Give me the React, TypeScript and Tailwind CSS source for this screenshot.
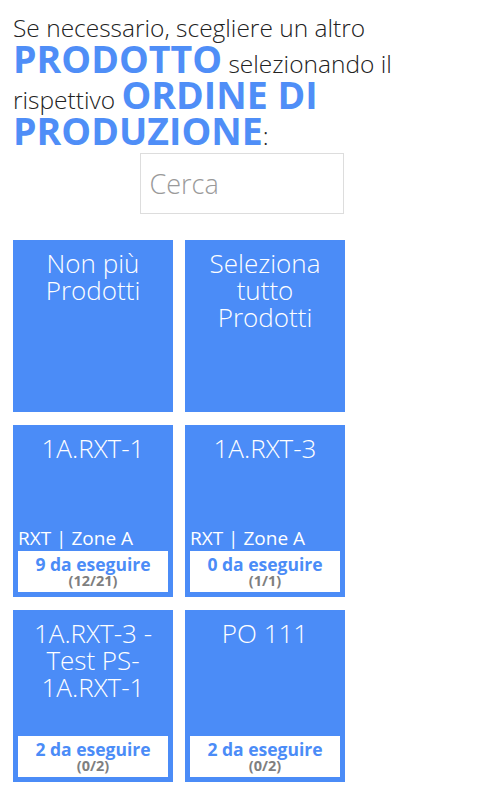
import React from "react";

type Order = {
  title: string;
  zone?: string;
  todo?: number;
  done?: string;
};

const orders: Order[] = [
  { title: "Non più Prodotti" },
  { title: "Seleziona tutto Prodotti" },
  { title: "1A.RXT-1", zone: "RXT | Zone A", todo: 9, done: "(12/21)" },
  { title: "1A.RXT-3", zone: "RXT | Zone A", todo: 0, done: "(1/1)" },
  { title: "1A.RXT-3 - Test PS-1A.RXT-1", todo: 2, done: "(0/2)" },
  { title: "PO 111", todo: 2, done: "(0/2)" },
];

function OrderCard({ order }: { order: Order }) {
  return (
    <div className="flex h-[172px] w-[160px] flex-col bg-[#4b8cf7] p-[5px] text-white">
      <div className="pt-[5px] text-center text-[26px] font-light leading-[27px]">
        {order.title}
      </div>
      <div className="mt-auto">
        {order.zone && (
          <div className="mb-[2px] text-[19px] leading-[22px]">{order.zone}</div>
        )}
        {order.todo !== undefined && (
          <div className="flex h-[41px] flex-col items-center justify-center bg-white">
            <div className="text-[17.5px] font-bold leading-[18px] text-[#4b8cf7]">
              {order.todo} da eseguire
            </div>
            <div className="text-[14.5px] font-bold leading-[15px] text-[#7f7f7f]">
              {order.done}
            </div>
          </div>
        )}
      </div>
    </div>
  );
}

export default function App() {
  return (
    <div
      className="min-h-screen bg-white px-[13px] pt-[10px]"
      style={{ fontFamily: '"Open Sans", sans-serif' }}
    >
      <p className="text-[24.5px] font-light leading-[36px] text-[#222]">
        Se necessario, scegliere un altro{" "}
        <span className="text-[37.5px] font-bold leading-[0px] text-[#4f8ef7]">PRODOTTO</span>{" "}
        selezionando il rispettivo{" "}
        <span className="text-[37.5px] font-bold leading-[0px] text-[#4f8ef7]">
          ORDINE DI PRODUZIONE
        </span>
        :
      </p>

      <div className="-mt-px flex justify-center">
        <input
          type="text"
          placeholder="Cerca"
          className="h-[61px] w-[204px] border border-[#dddddd] px-[9px] text-[27px] font-light text-[#333] placeholder:text-[#9a9a9a] focus:outline-none"
        />
      </div>

      <div className="mt-[26px] grid w-[332px] grid-cols-2 gap-x-[12px] gap-y-[13px]">
        {orders.map((o) => (
          <OrderCard key={o.title} order={o} />
        ))}
      </div>
    </div>
  );
}
